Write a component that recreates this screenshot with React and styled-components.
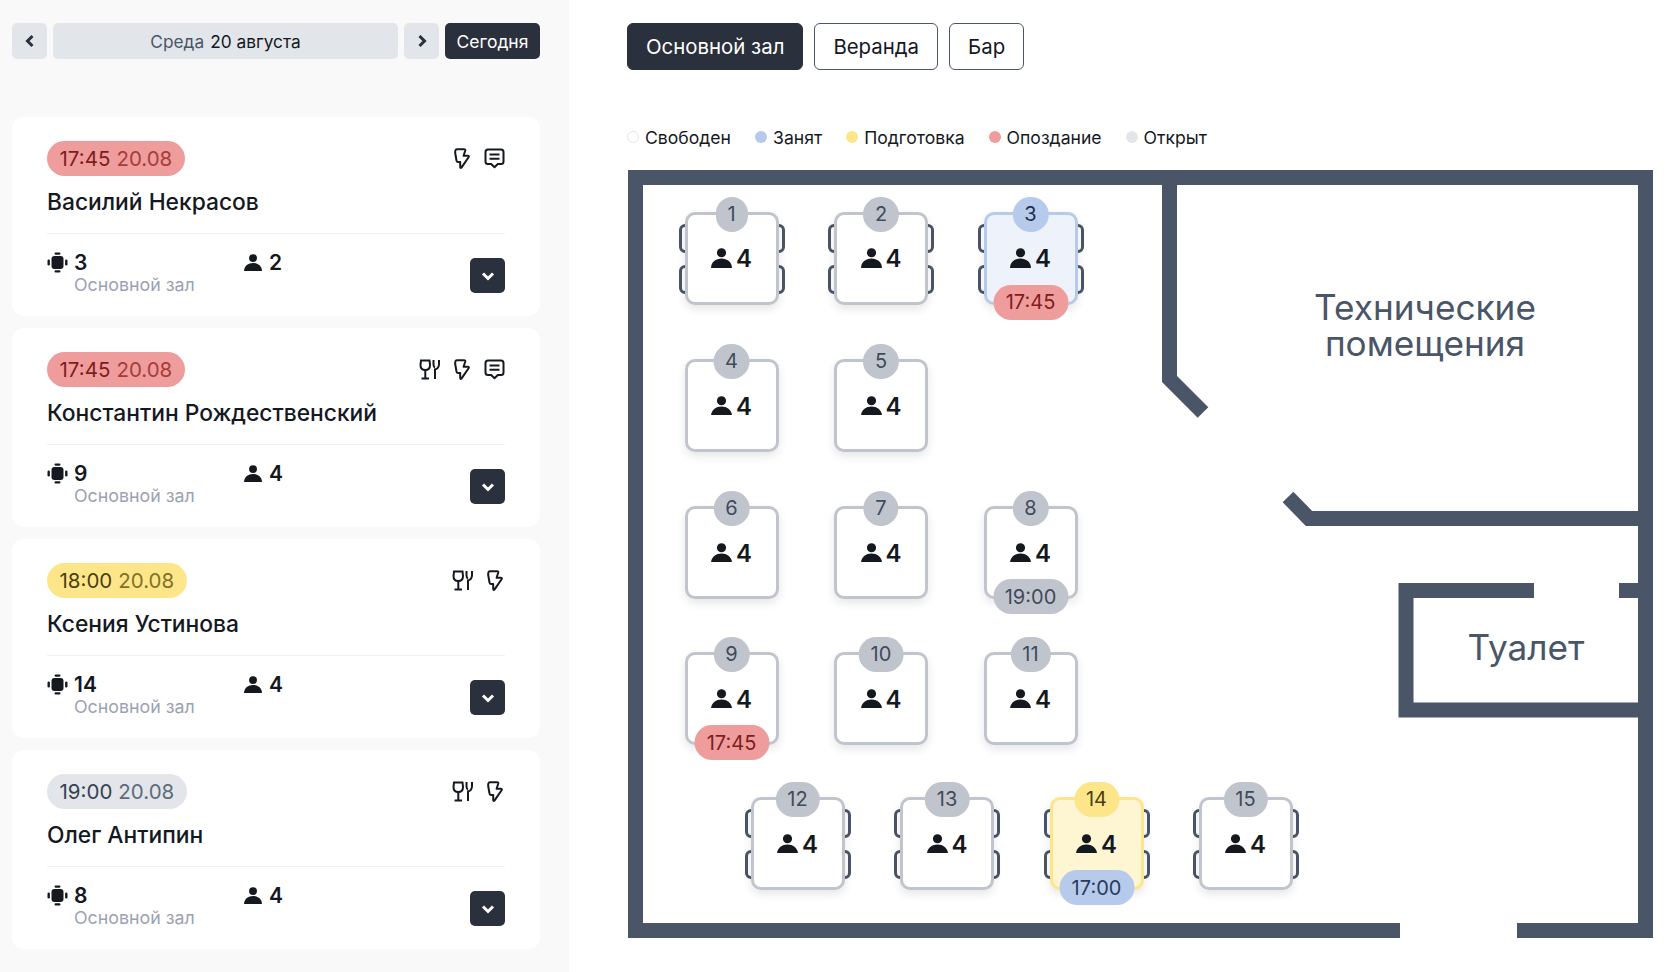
import styled, { createGlobalStyle } from 'styled-components';

const GlobalStyle = createGlobalStyle`
  html, body {
    margin: 0;
    padding: 0;
    background: #fff;
    font-family: Inter, "Noto Sans", sans-serif;
    color: #14181f;
  }
  * { box-sizing: border-box; }
`;

const WALL = '#4a5568';
const DARK = '#2a303c';

const TONES = {
  red: { bg: '#ef9c9c', text: '#7f1d1d', soft: '#9b2c2c' },
  yellow: { bg: '#fde68a', text: '#4a3f10', soft: '#6d5c14' },
  grey: { bg: '#e2e5ea', text: '#374151', soft: '#4a5568' },
  blue: { bg: '#b6cbeb', text: '#2a3a5c', soft: '#2a3a5c' },
  mid: { bg: '#c0c5cd', text: '#3f4a5c', soft: '#3f4a5c' },
};

const Page = styled.div`
  display: grid;
  grid-template-columns: 569px 1fr;
  width: 1674px;
  height: 972px;
  overflow: hidden;
`;

const Sidebar = styled.aside`
  background: #f9f9f9;
  padding: 23px 29px 0 12px;
`;

const DateBar = styled.div`
  display: flex;
  gap: 6px;
  height: 36px;
  margin-bottom: 58px;
`;

const NavButton = styled.button`
  width: 35px;
  border: 0;
  padding: 0;
  border-radius: 5px;
  background: #e2e5ea;
  color: ${DARK};
  display: flex;
  align-items: center;
  justify-content: center;
`;

const DateLabel = styled.div`
  flex: 1;
  border-radius: 5px;
  background: #e2e5ea;
  display: flex;
  align-items: center;
  justify-content: center;
  gap: 6px;
  font-size: 17.3px;
  color: #14181f;
`;

const Weekday = styled.span`
  color: #4a5568;
`;

const TodayButton = styled.button`
  width: 95px;
  border: 0;
  padding: 0;
  border-radius: 5px;
  background: ${DARK};
  color: #fff;
  font: inherit;
  font-size: 17.5px;
`;

const CardList = styled.div`
  display: flex;
  flex-direction: column;
  gap: 12px;
`;

const Card = styled.article`
  height: 199px;
  background: #fff;
  border-radius: 12px;
  padding: 24px 35px 0;
`;

const CardTop = styled.div`
  display: flex;
  align-items: center;
  justify-content: space-between;
  height: 35px;
`;

const TimeBadge = styled.div`
  height: 35px;
  padding: 0 12.5px 1px;
  border-radius: 18px;
  display: flex;
  align-items: center;
  gap: 6px;
  font-size: 20.5px;
  background: ${(p) => TONES[p.$tone].bg};
  color: ${(p) => TONES[p.$tone].text};
`;

const BadgeDate = styled.span`
  color: ${(p) => TONES[p.$tone].soft};
  opacity: 0.85;
`;

const CardIcons = styled.div`
  display: flex;
  align-items: center;
  gap: 14px;
  padding-right: ${(p) => (p.$short ? 2 : 0)}px;
  color: #14181f;
`;

const GuestName = styled.h3`
  margin: 9px 0 0;
  height: 33px;
  font-size: 22.8px;
  line-height: 33px;
  font-weight: 500;
`;

const Divider = styled.div`
  height: 1px;
  margin-top: 15px;
  background: #f0f1f3;
`;

const CardBottom = styled.div`
  display: grid;
  grid-template-columns: 197px 1fr 35px;
  padding-top: 16px;
`;

const TableInfo = styled.div`
  display: grid;
  grid-template-columns: 27px 1fr;
  align-items: center;
`;

const InfoValue = styled.span`
  margin-top: 1px;
  font-size: 21px;
  line-height: 24px;
  font-weight: 600;
`;

const HallName = styled.span`
  grid-column: 2;
  font-size: 17.8px;
  line-height: 19px;
  color: #9aa2b1;
`;

const GuestInfo = styled.div`
  display: flex;
  align-items: center;
  align-self: start;
  height: 25px;
  gap: 7px;
`;

const ExpandButton = styled.button`
  width: 35px;
  height: 35px;
  margin-top: 8px;
  border: 0;
  padding: 0;
  border-radius: 5px;
  background: ${DARK};
  color: #fff;
  display: flex;
  align-items: center;
  justify-content: center;
`;

const Main = styled.main`
  padding: 23px 21px 0 59px;
`;

const Tabs = styled.div`
  display: flex;
  gap: 11px;
  margin-left: -1px;
`;

const Tab = styled.button`
  height: 47px;
  padding: 0 18px;
  border-radius: 6px;
  border: 1.5px solid ${(p) => (p.$active ? DARK : WALL)};
  background: ${(p) => (p.$active ? DARK : '#fff')};
  color: ${(p) => (p.$active ? '#fff' : '#14181f')};
  font: inherit;
  font-size: 20.4px;
`;

const Legend = styled.div`
  display: flex;
  align-items: center;
  gap: 24px;
  height: 24px;
  margin: 55px 0 21px -1px;
`;

const LegendItem = styled.div`
  display: flex;
  align-items: center;
  gap: 6px;
  font-size: 17.6px;
`;

const LegendDot = styled.span`
  width: 12px;
  height: 12px;
  border-radius: 50%;
  background: ${(p) => p.$color};
  border: ${(p) => (p.$outline ? '1.5px solid #e2e5ea' : '0')};
`;

const Floor = styled.div`
  position: relative;
  width: 1025px;
  height: 768px;
`;

const Walls = styled.svg`
  position: absolute;
  inset: 0;
`;

const RoomLabel = styled.div`
  position: absolute;
  transform: translate(-50%, -50%);
  left: ${(p) => p.$x}px;
  top: ${(p) => p.$y}px;
  text-align: center;
  color: ${WALL};
  font-size: 35.2px;
  line-height: 36px;
  white-space: nowrap;
`;

const TableBox = styled.div`
  position: absolute;
  left: ${(p) => p.$x}px;
  top: ${(p) => p.$y}px;
  width: 94px;
  height: 93px;
`;

const TableTop = styled.div`
  position: relative;
  height: 100%;
  border-radius: 10px;
  border: 3px solid ${(p) => p.$border};
  background: ${(p) => p.$bg};
  box-shadow: 0 4px 10px rgba(0, 0, 0, 0.1);
  display: flex;
  align-items: center;
  justify-content: center;
  gap: 4px;
`;

const SeatCount = styled.span`
  padding-top: 2px;
  font-size: 24px;
  font-weight: 600;
  line-height: 1;
`;

const Chair = styled.span`
  position: absolute;
  top: ${(p) => p.$top}px;
  ${(p) => (p.$side === 'left' ? 'left: -6px;' : 'right: -6px;')}
  width: 12px;
  height: 29px;
  border: 3px solid ${WALL};
  border-radius: 6px;
`;

const TableNumber = styled.div`
  position: absolute;
  z-index: 2;
  top: -15px;
  left: 50%;
  transform: translateX(-50%);
  height: 35px;
  padding: 0 12px 1px;
  border-radius: 18px;
  display: flex;
  align-items: center;
  justify-content: center;
  font-size: 20px;
  background: ${(p) => p.$bg};
  color: ${(p) => p.$color};
`;

const TableTime = styled.div`
  position: absolute;
  z-index: 2;
  bottom: -15px;
  left: 50%;
  transform: translateX(-50%);
  width: 75px;
  height: 35px;
  border-radius: 18px;
  display: flex;
  align-items: center;
  justify-content: center;
  font-size: 20px;
  background: ${(p) => TONES[p.$tone].bg};
  color: ${(p) => TONES[p.$tone].text};
`;

const Chevron = ({ dir }) => {
  const d = { left: 'M8.5 2 L3.5 7 L8.5 12', right: 'M3.5 2 L8.5 7 L3.5 12', down: 'M2 3.5 L7 8.5 L12 3.5' }[dir];
  return (
    <svg width={dir === 'down' ? 14 : 12} height={dir === 'down' ? 12 : 14} viewBox={dir === 'down' ? '0 0 14 12' : '0 0 12 14'} fill="none">
      <path d={d} stroke="currentColor" strokeWidth="3" />
    </svg>
  );
};

const PersonIcon = ({ size = 21 }) => (
  <svg width={size} height={size * 0.95} viewBox="0 0 21 20" fill="#14181f">
    <circle cx="10.5" cy="4.8" r="4.6" />
    <path d="M0 20 C0 14 5 10.5 10.5 10.5 C16 10.5 21 14 21 20 Z" />
  </svg>
);

const TableIcon = () => (
  <svg width="21" height="21" viewBox="0 0 21 21" fill="#14181f">
    <rect x="4.5" y="4" width="12" height="13" rx="3" />
    <rect x="7.5" y="0.5" width="6" height="2.2" rx="1.1" />
    <rect x="7.5" y="18.3" width="6" height="2.2" rx="1.1" />
    <rect x="0.5" y="7.5" width="2.4" height="6" rx="1.2" />
    <rect x="18.1" y="7.5" width="2.4" height="6" rx="1.2" />
  </svg>
);

const BoltIcon = () => (
  <svg width="16" height="21" viewBox="0 0 16 21" fill="none" stroke="currentColor" strokeWidth="2" strokeLinejoin="round">
    <path d="M3.2 1.2 H10 Q11.6 1.2 11.2 2.8 L9.6 7.8 H13.8 Q15.4 7.8 14.6 9.2 L7.6 19.4 Q6.2 20.6 6.2 18.8 V14 H4.2 Q2.8 14 2.5 12.5 L1.2 5 Q0.9 1.2 3.2 1.2 Z" />
  </svg>
);

const ChatIcon = () => (
  <svg width="21" height="21" viewBox="0 0 21 21" fill="none" stroke="currentColor" strokeWidth="2" strokeLinejoin="round">
    <path d="M4 1.5 H17 Q19.5 1.5 19.5 4 V13.5 Q19.5 16 17 16 H13.8 L10.5 19.2 L7.2 16 H4 Q1.5 16 1.5 13.5 V4 Q1.5 1.5 4 1.5 Z" />
    <path d="M5.5 6.6 H15.5 M5.5 10.8 H15.5" />
  </svg>
);

const DiningIcon = () => (
  <svg width="21" height="21" viewBox="0 0 21 21" fill="none" stroke="currentColor" strokeWidth="2">
    <path d="M2 1.5 H10.5 L11 6 Q11 11 6.3 11 Q1.5 11 1.5 6 Z" />
    <path d="M6.3 11 V19.5 M2.5 19.5 H10" />
    <path d="M14.5 1 V5.5 Q14.5 8 16 8.5 M20 1 V5 Q20 9.5 16 10.5 V20" />
  </svg>
);

const bookings = [
  { time: '17:45', tone: 'red', name: 'Василий Некрасов', table: 3, guests: 2, dining: false, chat: true },
  { time: '17:45', tone: 'red', name: 'Константин Рождественский', table: 9, guests: 4, dining: true, chat: true },
  { time: '18:00', tone: 'yellow', name: 'Ксения Устинова', table: 14, guests: 4, dining: true, chat: false },
  { time: '19:00', tone: 'grey', name: 'Олег Антипин', table: 8, guests: 4, dining: true, chat: false },
];

const legend = [
  { label: 'Свободен', color: '#fff', outline: true },
  { label: 'Занят', color: '#b6cbeb' },
  { label: 'Подготовка', color: '#fde68a' },
  { label: 'Опоздание', color: '#ef9c9c' },
  { label: 'Открыт', color: '#e2e5ea' },
];

const rows = [41.5, 189, 336, 482, 627];
const colsA = [56.5, 206, 355.5];
const colsB = [122.5, 272, 421.5, 570.5];

const tables = [
  { n: 1, x: colsA[0], y: rows[0], chairs: true },
  { n: 2, x: colsA[1], y: rows[0], chairs: true },
  { n: 3, x: colsA[2], y: rows[0], chairs: true, state: 'blue', time: '17:45', timeTone: 'red' },
  { n: 4, x: colsA[0], y: rows[1] },
  { n: 5, x: colsA[1], y: rows[1] },
  { n: 6, x: colsA[0], y: rows[2] },
  { n: 7, x: colsA[1], y: rows[2] },
  { n: 8, x: colsA[2], y: rows[2], time: '19:00', timeTone: 'mid' },
  { n: 9, x: colsA[0], y: rows[3], time: '17:45', timeTone: 'red' },
  { n: 10, x: colsA[1], y: rows[3] },
  { n: 11, x: colsA[2], y: rows[3] },
  { n: 12, x: colsB[0], y: rows[4], chairs: true },
  { n: 13, x: colsB[1], y: rows[4], chairs: true },
  { n: 14, x: colsB[2], y: rows[4], chairs: true, state: 'yellow', time: '17:00', timeTone: 'blue' },
  { n: 15, x: colsB[3], y: rows[4], chairs: true },
];

const tableStates = {
  free: { border: '#c0c5cd', bg: '#fff', numBg: '#c0c5cd', numColor: '#3f4a5c' },
  blue: { border: '#b6cbeb', bg: '#eef3fb', numBg: '#b6cbeb', numColor: '#1f2d4d' },
  yellow: { border: '#fde68a', bg: '#fef5d3', numBg: '#fde68a', numColor: '#4a3f10' },
};

function FloorTable({ n, x, y, chairs, state = 'free', time, timeTone }) {
  const s = tableStates[state];
  return (
    <TableBox $x={x} $y={y}>
      {chairs && (
        <>
          <Chair $side="left" $top={12} />
          <Chair $side="left" $top={53} />
          <Chair $side="right" $top={12} />
          <Chair $side="right" $top={53} />
        </>
      )}
      <TableTop $border={s.border} $bg={s.bg}>
        <PersonIcon />
        <SeatCount>4</SeatCount>
      </TableTop>
      <TableNumber $bg={s.numBg} $color={s.numColor}>{n}</TableNumber>
      {time && <TableTime $tone={timeTone}>{time}</TableTime>}
    </TableBox>
  );
}

export default function App() {
  return (
    <Page>
      <GlobalStyle />
      <Sidebar>
        <DateBar>
          <NavButton><Chevron dir="left" /></NavButton>
          <DateLabel><Weekday>Среда</Weekday> 20 августа</DateLabel>
          <NavButton><Chevron dir="right" /></NavButton>
          <TodayButton>Сегодня</TodayButton>
        </DateBar>
        <CardList>
          {bookings.map((b) => (
            <Card key={b.name}>
              <CardTop>
                <TimeBadge $tone={b.tone}>
                  {b.time} <BadgeDate $tone={b.tone}>20.08</BadgeDate>
                </TimeBadge>
                <CardIcons $short={!b.chat}>
                  {b.dining && <DiningIcon />}
                  <BoltIcon />
                  {b.chat && <ChatIcon />}
                </CardIcons>
              </CardTop>
              <GuestName>{b.name}</GuestName>
              <Divider />
              <CardBottom>
                <TableInfo>
                  <TableIcon />
                  <InfoValue>{b.table}</InfoValue>
                  <HallName>Основной зал</HallName>
                </TableInfo>
                <GuestInfo>
                  <PersonIcon size={18} />
                  <InfoValue>{b.guests}</InfoValue>
                </GuestInfo>
                <ExpandButton><Chevron dir="down" /></ExpandButton>
              </CardBottom>
            </Card>
          ))}
        </CardList>
      </Sidebar>
      <Main>
        <Tabs>
          <Tab $active>Основной зал</Tab>
          <Tab>Веранда</Tab>
          <Tab>Бар</Tab>
        </Tabs>
        <Legend>
          {legend.map((l) => (
            <LegendItem key={l.label}>
              <LegendDot $color={l.color} $outline={l.outline} />
              {l.label}
            </LegendItem>
          ))}
        </Legend>
        <Floor>
          <Walls width="1025" height="768" viewBox="0 0 1025 768" fill="none" stroke={WALL} strokeWidth="15">
            <path d="M772 760.5 H7.5 V7.5 H1017.5 V760.5 H889" />
            <path d="M541.5 7 V209 L575 242.5" />
            <path d="M1011 348.5 H681 L660 327" />
            <path d="M906 420.5 H778 V540 H1011" />
            <path d="M991 420.5 H1011" />
          </Walls>
          <RoomLabel $x={797} $y={155}>Технические<br />помещения</RoomLabel>
          <RoomLabel $x={898} $y={477}>Туалет</RoomLabel>
          {tables.map((t) => (
            <FloorTable key={t.n} {...t} />
          ))}
        </Floor>
      </Main>
    </Page>
  );
}
